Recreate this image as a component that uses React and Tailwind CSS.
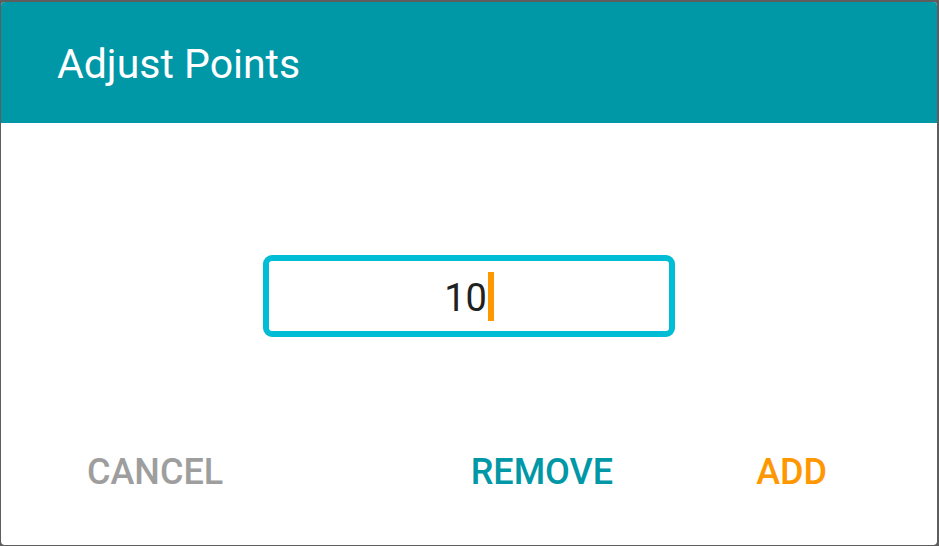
export default function App() {
  return (
    <div
      className="w-[939px] h-[546px] bg-[#5e5e5e] pt-[2px] pl-[1px] pr-[2px] pb-[1px] overflow-hidden"
      style={{ fontFamily: "Roboto, 'Noto Sans', sans-serif" }}
    >
      <div className="w-full h-full bg-white rounded-[4px] overflow-hidden flex flex-col">
        <div className="h-[121px] shrink-0 bg-[#0097a7] flex items-center pl-[56px] pt-[4px]">
          <span className="text-white text-[41px] leading-none font-normal">Adjust Points</span>
        </div>
        <div className="flex justify-center pt-[132px]">
          <div className="w-[412px] h-[82px] border-[6px] border-[#00bcd4] rounded-[9px] flex items-center justify-center">
            <span className="text-[38px] leading-none text-[#212121] pt-[3px]">10</span>
            <span className="w-[6px] h-[49px] bg-[#ff9800] ml-[1px]" />
          </div>
        </div>
        <div className="flex items-center pl-[86px] pr-[110px] mt-[117px]">
          <span className="text-[36px] leading-none font-medium text-[#9e9e9e]">CANCEL</span>
          <span className="ml-auto text-[36px] leading-none font-medium text-[#0097a7]">REMOVE</span>
          <span className="ml-[143px] text-[36px] leading-none font-medium text-[#ff9800]">ADD</span>
        </div>
      </div>
    </div>
  );
}
